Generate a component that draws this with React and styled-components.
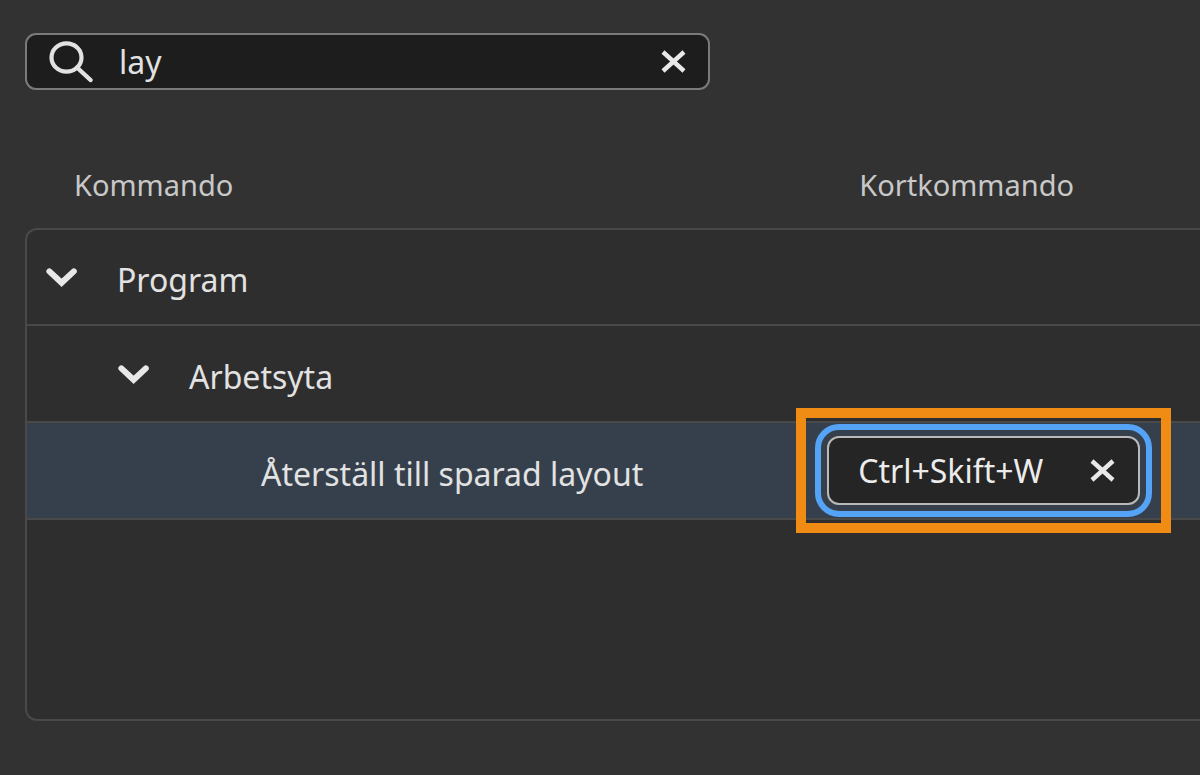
import { useState } from "react";
import styled, { createGlobalStyle } from "styled-components";

const GlobalStyle = createGlobalStyle`
  * {
    box-sizing: border-box;
  }

  body {
    margin: 0;
    background-color: #323232;
    color: #e2e2e2;
    font-family: "Noto Sans", "Open Sans", sans-serif;
    font-size: 32px;
    line-height: 44px;
  }
`;

const Page = styled.main`
  padding: 33px 0 54px 25px;
  overflow: hidden;
`;

const SearchBox = styled.div`
  display: flex;
  align-items: center;
  width: 100%;
  max-width: 685px;
  height: 57px;
  padding: 0 22px;
  background-color: #1d1d1d;
  border: 2px solid #7a7a7a;
  border-radius: 11px;
`;

const TextInput = styled.input`
  flex: 1;
  min-width: 0;
  height: 44px;
  padding: 0;
  border: none;
  outline: none;
  background: transparent;
  color: ${({ $bright }) => ($bright ? "#ececec" : "#e2e2e2")};
  font: inherit;
`;

const SearchInput = styled(TextInput)`
  margin-left: 26px;
`;

const IconButton = styled.button`
  display: flex;
  flex: none;
  padding: 0;
  border: none;
  background: transparent;
  color: #e8e8e8;
  cursor: pointer;
`;

const CommandTable = styled.table`
  width: 100%;
  margin-top: 70px;
  border-collapse: separate;
  border-spacing: 0;
  table-layout: fixed;
`;

const HeaderCell = styled.th`
  width: ${({ $width }) => $width};
  height: 68px;
  padding: 5px 0 0 ${({ $indent }) => $indent}px;
  color: #c8c8c8;
  font-size: 29px;
  font-weight: 400;
  line-height: 40px;
  text-align: left;
  vertical-align: top;
`;

const Cell = styled.td`
  height: 97px;
  padding: 0;
  background-color: ${({ $selected }) => ($selected ? "#35404c" : "#2e2e2e")};
  border-bottom: 2px solid #494949;

  &:first-child {
    border-left: 2px solid #494949;
  }

  tr:first-child > & {
    height: 98px;
    border-top: 2px solid #494949;
  }

  tr:first-child > &:first-child {
    border-top-left-radius: 12px;
  }
`;

const EmptyCell = styled(Cell)`
  height: 201px;
  border-bottom-left-radius: 12px;
`;

const TreeItem = styled.div`
  display: flex;
  align-items: center;
  gap: 39px;
  padding-left: ${({ $level }) => 19 + $level * 72}px;
`;

const LeafItem = styled(TreeItem)`
  padding-left: 234px;
`;

const Label = styled.span`
  padding-top: 6px;
  white-space: nowrap;
`;

const ShortcutField = styled.div`
  position: relative;
  display: flex;
  align-items: center;
  width: 313px;
  height: 69px;
  margin-left: 15px;
  padding: 0 23px 0 29px;
  background-color: #252525;
  border: 2px solid #b9b9b9;
  border-radius: 12px;
  outline: 6px solid #54a3f6;
  outline-offset: 6px;
`;

const Highlight = styled.div`
  position: absolute;
  inset: -30px -33px;
  border: 10px solid #f08c14;
  pointer-events: none;
`;

function SearchIcon() {
  return (
    <svg width="44" height="42" viewBox="0 0 44 42" fill="none" stroke="#e2e2e2" strokeWidth="4.2" aria-hidden="true">
      <ellipse cx="17.5" cy="16.5" rx="15" ry="14.2" />
      <path d="M28 26.5L41.5 39" strokeLinecap="round" strokeWidth="4.4" />
    </svg>
  );
}

function CloseIcon() {
  return (
    <svg width="26" height="24" viewBox="0 0 26 24" fill="none" stroke="currentColor" strokeWidth="4.4" aria-hidden="true">
      <path d="M3 2L24 21M24 2L3 21" />
    </svg>
  );
}

function ChevronIcon() {
  return (
    <svg
      width="32"
      height="20"
      viewBox="0 0 32 20"
      fill="none"
      stroke="currentColor"
      strokeWidth="6"
      strokeLinecap="round"
      aria-hidden="true"
    >
      <path d="M3.4 4.4L15.6 15.8L27.8 4.4" />
    </svg>
  );
}

function Group({ name, level }) {
  return (
    <tr>
      <Cell>
        <TreeItem $level={level}>
          <IconButton type="button" aria-label={name} aria-expanded="true">
            <ChevronIcon />
          </IconButton>
          <Label>{name}</Label>
        </TreeItem>
      </Cell>
      <Cell />
    </tr>
  );
}

export default function App() {
  const [query, setQuery] = useState("lay");
  const [shortcut, setShortcut] = useState("Ctrl+Skift+W");

  return (
    <Page>
      <GlobalStyle />
      <SearchBox>
        <SearchIcon />
        <SearchInput
          type="text"
          aria-label="Sök"
          value={query}
          onChange={(e) => setQuery(e.target.value)}
        />
        <IconButton type="button" aria-label="Rensa sökning" onClick={() => setQuery("")}>
          <CloseIcon />
        </IconButton>
      </SearchBox>

      <CommandTable>
        <thead>
          <tr>
            <HeaderCell $width="67%" $indent={49}>
              Kommando
            </HeaderCell>
            <HeaderCell $width="33%" $indent={47}>
              Kortkommando
            </HeaderCell>
          </tr>
        </thead>
        <tbody>
          <Group name="Program" level={0} />
          <Group name="Arbetsyta" level={1} />
          <tr>
            <Cell $selected>
              <LeafItem>
                <Label>Återställ till sparad layout</Label>
              </LeafItem>
            </Cell>
            <Cell $selected>
              <ShortcutField>
                <TextInput
                  $bright
                  type="text"
                  aria-label="Kortkommando"
                  value={shortcut}
                  onChange={(e) => setShortcut(e.target.value)}
                />
                <IconButton type="button" aria-label="Ta bort kortkommando" onClick={() => setShortcut("")}>
                  <CloseIcon />
                </IconButton>
                <Highlight />
              </ShortcutField>
            </Cell>
          </tr>
          <tr>
            <EmptyCell />
            <Cell />
          </tr>
        </tbody>
      </CommandTable>
    </Page>
  );
}
